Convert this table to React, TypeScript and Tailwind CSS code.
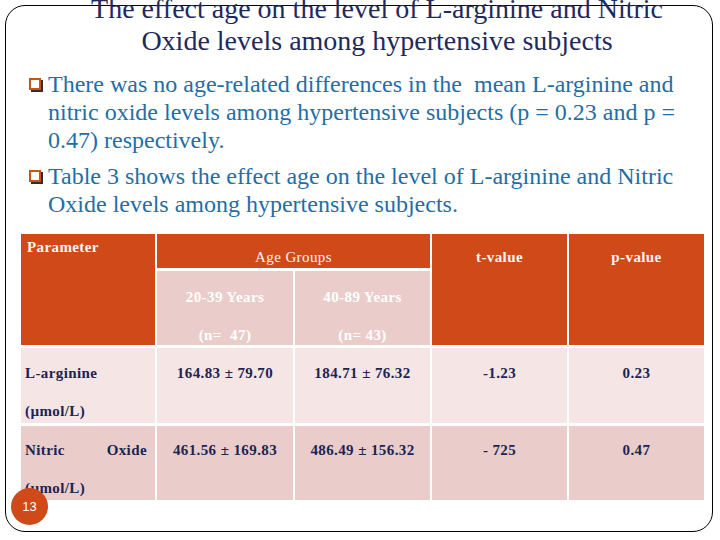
export default function App() {
  const serif = "font-['Liberation_Serif','Times_New_Roman',serif]";

  return (
    <div className={`relative w-[720px] h-[540px] bg-white overflow-hidden ${serif}`}>
      {/* slide frame */}
      <div className="absolute left-[5px] top-[5px] w-[708px] h-[527px] border border-black rounded-[20px] pointer-events-none" />

      {/* Title */}
      <div className="relative -mt-[7px] ml-[36px] w-[682px] text-center text-[28px] leading-[32px] text-[#1f2a5c]">
        <div>The effect age on the level of L-arginine and Nitric</div>
        <div>Oxide levels among hypertensive subjects</div>
      </div>

      {/* Bullets */}
      <div className="mt-[13px] flex flex-col gap-[8px] text-[24px] leading-[28px] text-[#1f6ea6]">
        <Bullet
          lines={[
            'There was no age-related differences in the  mean L-arginine and',
            'nitric oxide levels among hypertensive subjects (p = 0.23 and p =',
            '0.47) respectively.',
          ]}
        />
        <Bullet
          lines={[
            'Table 3 shows the effect age on the level of L-arginine and Nitric',
            'Oxide levels among hypertensive subjects.',
          ]}
        />
      </div>

      {/* Table */}
      <div className="mt-[16px] ml-[21px] grid grid-cols-[134px_136px_135px_135px_135px] grid-rows-[34px_74px_75px_74px] gap-x-[2px] gap-y-[3px] text-[15px] tracking-[0.4px]">
        <div className="row-span-2 bg-[#d04a19] text-[#fff6ee] font-bold pl-[6px] pt-[4px] leading-[18px]">
          Parameter
        </div>
        <div className="col-span-2 bg-[#d04a19] text-[#fff6ee] text-center pt-[14px] leading-[18px]">
          Age Groups
        </div>
        <div className="row-span-2 bg-[#d04a19] text-[#fff6ee] font-bold text-center pt-[14px] leading-[18px]">
          t-value
        </div>
        <div className="row-span-2 bg-[#d04a19] text-[#fff6ee] font-bold text-center pt-[14px] leading-[18px]">
          p-value
        </div>

        <div className="col-start-2 bg-[#eacdcb] text-white font-bold text-center pt-[7px] leading-[38px]">
          <div>20-39 Years</div>
          <div>(n=&nbsp; 47)</div>
        </div>
        <div className="bg-[#eacdcb] text-white font-bold text-center pt-[7px] leading-[38px]">
          <div>40-89 Years</div>
          <div>(n= 43)</div>
        </div>

        {/* L-arginine row */}
        <div className="bg-[#f5e5e4] text-[#1c2452] font-bold pl-[4px] pt-[6px] leading-[38px]">
          <div>L-arginine</div>
          <div>(µmol/L)</div>
        </div>
        <Value bg="bg-[#f5e5e4]" pt="pt-[6px]">164.83 ± 79.70</Value>
        <Value bg="bg-[#f5e5e4]" pt="pt-[6px]">184.71 ± 76.32</Value>
        <Value bg="bg-[#f5e5e4]" pt="pt-[6px]">-1.23</Value>
        <Value bg="bg-[#f5e5e4]" pt="pt-[6px]">0.23</Value>

        {/* Nitric oxide row */}
        <div className="bg-[#eacdcb] text-[#1c2452] font-bold pl-[4px] pr-[8px] pt-[5px] leading-[38px]">
          <div className="flex justify-between">
            <span>Nitric</span>
            <span>Oxide</span>
          </div>
          <div>(µmol/L)</div>
        </div>
        <Value bg="bg-[#eacdcb]" pt="pt-[5px]">461.56 ± 169.83</Value>
        <Value bg="bg-[#eacdcb]" pt="pt-[5px]">486.49 ± 156.32</Value>
        <Value bg="bg-[#eacdcb]" pt="pt-[5px]">- 725</Value>
        <Value bg="bg-[#eacdcb]" pt="pt-[5px]">0.47</Value>
      </div>

      {/* slide number */}
      <div className="absolute left-[11px] top-[488px] w-[37px] h-[37px] rounded-full bg-[#d04a19] flex items-center justify-center text-white text-[13px] font-['Liberation_Sans',Arial,sans-serif]">
        13
      </div>
    </div>
  );
}

function Bullet({ lines }: { lines: string[] }) {
  return (
    <div className="flex pl-[29px]">
      <div className="w-[19px] shrink-0 pt-[8px]">
        <div className="w-[12px] h-[12px] border-2 border-[#c9531f] bg-white shadow-[2px_2px_0_#3b2b22]" />
      </div>
      <div className="whitespace-pre">
        {lines.map((l) => (
          <div key={l}>{l}</div>
        ))}
      </div>
    </div>
  );
}

function Value({ bg, pt, children }: { bg: string; pt: string; children: React.ReactNode }) {
  return (
    <div className={`${bg} ${pt} text-[#1c2452] font-bold text-center leading-[38px]`}>
      {children}
    </div>
  );
}
